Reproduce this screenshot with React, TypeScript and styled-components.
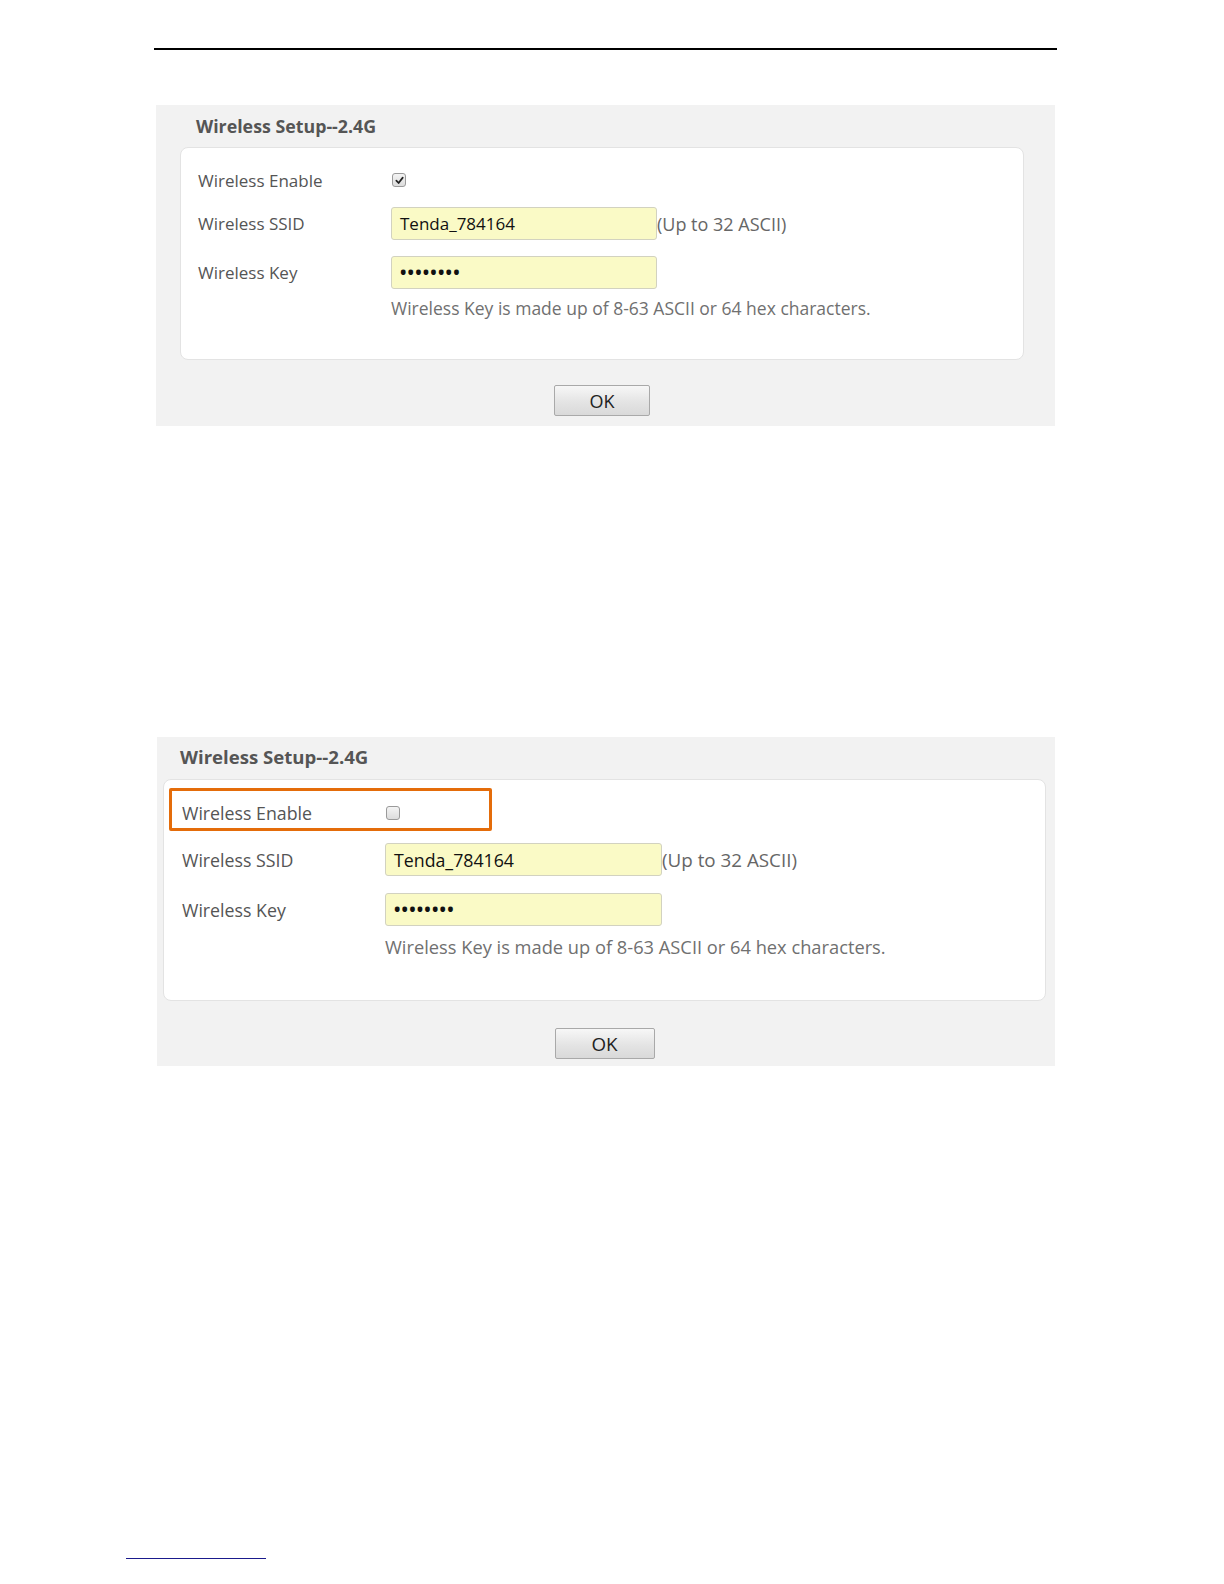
import React from "react";
import styled, { createGlobalStyle } from "styled-components";

const GlobalStyle = createGlobalStyle`
  html, body {
    margin: 0;
    padding: 0;
    background: #ffffff;
    overflow: hidden;
  }
  body {
    font-family: "Open Sans", "Noto Sans", "Liberation Sans", sans-serif;
  }
`;

type Metrics = {
  top: number;
  left: number;
  width: number;
  height: number;
  scale: number;
  titlePad: number;
  titleTop: number;
  cardLeft: number;
  cardRight: number;
  cardTop: number;
  cardPadTop: number;
  cardPadLeft: number;
  cardPadBottom: number;
  labelWidth: number;
  inputWidth: number;
  gap1: number;
  gap2: number;
  gap3: number;
  btnTop: number;
  btnWidth: number;
};

const Page = styled.div`
  width: 1224px;
  height: 1584px;
  display: flex;
  flex-direction: column;
  position: relative;
  overflow: hidden;
`;

const HeaderRule = styled.div`
  margin: 48px 0 0 154px;
  width: 903px;
  height: 2px;
  flex-shrink: 0;
  background: #000;
`;

const Panel = styled.section<{ $m: Metrics }>`
  margin-top: ${(p) => p.$m.top}px;
  margin-left: ${(p) => p.$m.left}px;
  width: ${(p) => p.$m.width}px;
  height: ${(p) => p.$m.height}px;
  flex-shrink: 0;
  background: #f2f2f2;
  box-sizing: border-box;
  display: flex;
  flex-direction: column;
`;

const Title = styled.h2<{ $m: Metrics }>`
  margin: ${(p) => p.$m.titleTop}px 0 0 ${(p) => p.$m.titlePad}px;
  height: 22px;
  line-height: 22px;
  font-size: ${(p) => 17.8 * p.$m.scale}px;
  font-weight: 700;
  color: #555555;
`;

const Card = styled.div<{ $m: Metrics }>`
  margin: ${(p) => p.$m.cardTop}px ${(p) => p.$m.cardRight}px 0
    ${(p) => p.$m.cardLeft}px;
  padding: ${(p) => p.$m.cardPadTop}px 0 ${(p) => p.$m.cardPadBottom}px
    ${(p) => p.$m.cardPadLeft}px;
  background: #ffffff;
  border: 1px solid #e3e3e3;
  border-radius: 8px;
  display: flex;
  flex-direction: column;
`;

const Row = styled.div<{ $gap: number; $h: number }>`
  position: relative;
  display: flex;
  align-items: center;
  height: ${(p) => p.$h}px;
  margin-top: ${(p) => p.$gap}px;
`;

const Label = styled.span<{ $w: number; $s: number }>`
  width: ${(p) => p.$w}px;
  flex-shrink: 0;
  font-size: ${(p) => 17 * p.$s}px;
  color: #555555;
`;

const Highlight = styled.div`
  position: absolute;
  left: -13px;
  top: -8px;
  width: 317px;
  height: 37px;
  border: 3px solid #e46c0a;
  border-radius: 2px;
  pointer-events: none;
`;

const Check = styled.span<{ $on: boolean }>`
  width: 12px;
  height: 12px;
  margin-left: 1px;
  border: 1px solid #9a9a9a;
  border-radius: 3px;
  background: linear-gradient(#f4f4f4, #dcdcdc);
  display: flex;
  align-items: center;
  justify-content: center;
`;

const Field = styled.div<{ $w: number; $s: number }>`
  width: ${(p) => p.$w}px;
  height: 33px;
  box-sizing: border-box;
  padding-left: 8px;
  background: #fafac6;
  border: 1px solid #d2d2c0;
  border-radius: 3px;
  display: flex;
  align-items: center;
  font-size: ${(p) => 17 * p.$s}px;
  color: #111111;
`;

const Dots = styled.span`
  font-size: 17px;
  letter-spacing: 1.2px;
  font-weight: 700;
`;

const Note = styled.span<{ $s: number }>`
  font-size: ${(p) => 18 * p.$s}px;
  color: #666666;
`;

const Help = styled.div<{ $gap: number; $left: number; $s: number }>`
  margin-top: ${(p) => p.$gap}px;
  margin-left: ${(p) => p.$left}px;
  line-height: 20px;
  font-size: ${(p) => 17.5 * p.$s}px;
  color: #707070;
`;

const Actions = styled.div<{ $m: Metrics }>`
  margin-top: ${(p) => p.$m.btnTop}px;
  display: flex;
  justify-content: center;
`;

const OkButton = styled.button<{ $w: number; $s: number }>`
  width: ${(p) => p.$w}px;
  height: 31px;
  margin-left: ${(p) => 2 * 554 - 156 * 2 - 899 + p.$w}px;
  padding: 0;
  border: 1px solid #a9a9a9;
  border-radius: 2px;
  background: linear-gradient(#f7f7f7, #e4e4e4 55%, #d9d9d9);
  font-family: "Open Sans", "Noto Sans", sans-serif;
  font-size: ${(p) => 18 * p.$s}px;
  color: #222222;
`;

const FooterRule = styled.div`
  position: absolute;
  left: 126px;
  top: 1558px;
  width: 140px;
  height: 1px;
  background: #1a1a8c;
`;

const first: Metrics = {
  top: 55,
  left: 156,
  width: 899,
  height: 321,
  scale: 1,
  titlePad: 40,
  titleTop: 10,
  cardLeft: 24,
  cardRight: 31,
  cardTop: 10,
  cardPadTop: 15,
  cardPadLeft: 17,
  cardPadBottom: 41,
  labelWidth: 193,
  inputWidth: 266,
  gap1: 10,
  gap2: 16,
  gap3: 9,
  btnTop: 25,
  btnWidth: 96,
};

const second: Metrics = {
  top: 311,
  left: 157,
  width: 898,
  height: 329,
  scale: 1.045,
  titlePad: 23,
  titleTop: 9,
  cardLeft: 6,
  cardRight: 9,
  cardTop: 11,
  cardPadTop: 16,
  cardPadLeft: 18,
  cardPadBottom: 43,
  labelWidth: 203,
  inputWidth: 277,
  gap1: 13,
  gap2: 17,
  gap3: 11,
  btnTop: 27,
  btnWidth: 100,
};

const CheckMark = () => (
  <svg width="9" height="9" viewBox="0 0 10 10">
    <path
      d="M1.5 5.2 L4 7.8 L8.6 1.8"
      fill="none"
      stroke="#222"
      strokeWidth="1.9"
      strokeLinecap="round"
      strokeLinejoin="round"
    />
  </svg>
);

const SetupPanel: React.FC<{ m: Metrics; enabled: boolean; marked?: boolean }> = ({
  m,
  enabled,
  marked,
}) => (
  <Panel $m={m}>
    <Title $m={m}>Wireless Setup--2.4G</Title>
    <Card $m={m}>
      <Row $gap={0} $h={34}>
        {marked && <Highlight />}
        <Label $w={m.labelWidth} $s={m.scale}>
          Wireless Enable
        </Label>
        <Check $on={enabled}>{enabled && <CheckMark />}</Check>
      </Row>
      <Row $gap={m.gap1} $h={33}>
        <Label $w={m.labelWidth} $s={m.scale}>
          Wireless SSID
        </Label>
        <Field $w={m.inputWidth} $s={m.scale}>
          Tenda_784164
        </Field>
        <Note $s={m.scale}>(Up to 32 ASCII)</Note>
      </Row>
      <Row $gap={m.gap2} $h={33}>
        <Label $w={m.labelWidth} $s={m.scale}>
          Wireless Key
        </Label>
        <Field $w={m.inputWidth} $s={m.scale}>
          <Dots>••••••••</Dots>
        </Field>
      </Row>
      <Help $gap={m.gap3} $left={m.labelWidth} $s={m.scale}>
        Wireless Key is made up of 8-63 ASCII or 64 hex characters.
      </Help>
    </Card>
    <Actions $m={m}>
      <OkButton $w={m.btnWidth} $s={m.scale}>
        OK
      </OkButton>
    </Actions>
  </Panel>
);

export default function App() {
  return (
    <Page>
      <GlobalStyle />
      <HeaderRule />
      <SetupPanel m={first} enabled />
      <SetupPanel m={second} enabled={false} marked />
      <FooterRule />
    </Page>
  );
}
